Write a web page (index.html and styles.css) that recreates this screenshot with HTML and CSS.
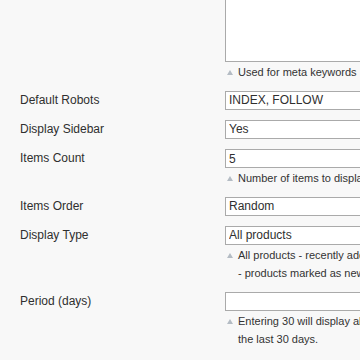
FILE: index.html
```html
<!DOCTYPE html>
<html lang="en">
<head>
    <meta charset="UTF-8">
    <meta name="viewport" content="width=device-width, initial-scale=1.0">
    <title>Block settings</title>
    <link rel="stylesheet" href="styles.css">
</head>
<body>
<div class="form-list">
    <div class="row">
        <label class="label">Meta Keywords</label>
        <div class="value">
            <textarea class="textarea"></textarea>
            <p class="note"><span class="arrow"></span><span>Used for meta keywords</span></p>
        </div>
    </div>
    <div class="row">
        <label class="label">Default Robots</label>
        <div class="value">
            <select class="select"><option>INDEX, FOLLOW</option></select>
        </div>
    </div>
    <div class="row">
        <label class="label">Display Sidebar</label>
        <div class="value">
            <select class="select"><option>Yes</option></select>
        </div>
    </div>
    <div class="row">
        <label class="label">Items Count</label>
        <div class="value">
            <input class="input-text" type="text" value="5">
            <p class="note"><span class="arrow"></span><span>Number of items to display</span></p>
        </div>
    </div>
    <div class="row">
        <label class="label">Items Order</label>
        <div class="value">
            <select class="select"><option>Random</option></select>
        </div>
    </div>
    <div class="row">
        <label class="label">Display Type</label>
        <div class="value">
            <select class="select"><option>All products</option></select>
            <p class="note"><span class="arrow"></span><span>All products - recently added products, New products<br>- products marked as new</span></p>
        </div>
    </div>
    <div class="row">
        <label class="label">Period (days)</label>
        <div class="value">
            <input class="input-text" type="text" value="">
            <p class="note"><span class="arrow"></span><span>Entering 30 will display all products which had been added during<br>the last 30 days.</span></p>
        </div>
    </div>
</div>
</body>
</html>
```

FILE: styles.css
```css
html, body {
    margin: 0;
    overflow: hidden;
}
body {
    background-color: #f8f8f8;
    color: #2f2f2f;
    font-family: "Liberation Sans", Arial, sans-serif;
    font-size: 12px;
}
.form-list {
    margin-top: -48px;
    padding-left: 20px;
}
.row {
    display: flex;
    margin-bottom: 10px;
}
.label {
    width: 205px;
    flex-shrink: 0;
    line-height: 19px;
}
.value {
    width: 300px;
    flex-shrink: 0;
}
.textarea {
    display: block;
    box-sizing: border-box;
    width: 280px;
    height: 110px;
    margin: 0;
    border: 1px solid #aaa;
    background-color: #fff;
    resize: none;
}
.select,
.input-text {
    display: block;
    box-sizing: border-box;
    width: 280px;
    height: 19px;
    margin: 0;
    padding: 0 3px;
    border: 1px solid #aaa;
    border-radius: 0;
    background-color: #fff;
    color: #2f2f2f;
    font-family: "Liberation Sans", Arial, sans-serif;
    font-size: 12px;
    line-height: 17px;
    appearance: none;
    -webkit-appearance: none;
    outline: none;
}
.note {
    display: flex;
    margin: 1px 0 0;
    font-size: 11px;
    line-height: 18px;
    white-space: nowrap;
    color: #333;
}
.arrow {
    width: 13px;
    flex-shrink: 0;
}
.arrow::before {
    content: "";
    display: block;
    margin: 7px 0 0 2px;
    width: 0;
    height: 0;
    border-left: 3px solid transparent;
    border-right: 3px solid transparent;
    border-bottom: 5px solid #b4bcc4;
}
```
